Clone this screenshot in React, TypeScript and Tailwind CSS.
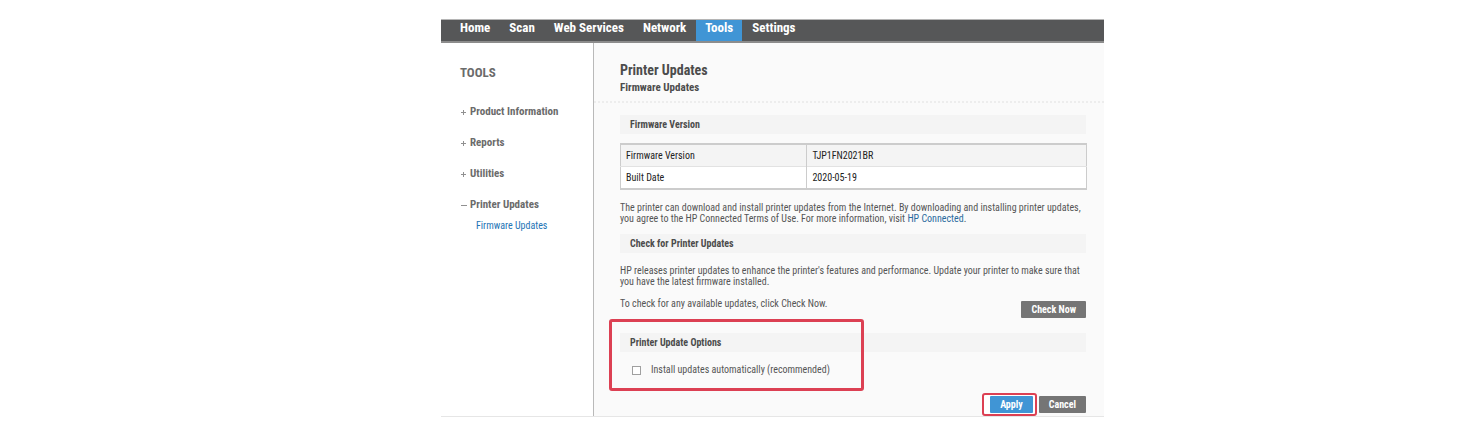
import { useState, type ReactNode } from "react";

const navItems = ["Home", "Scan", "Web Services", "Network", "Tools", "Settings"];

const menu = [
  { label: "Product Information", open: false },
  { label: "Reports", open: false },
  { label: "Utilities", open: false },
  { label: "Printer Updates", open: true },
];

const details = [
  { name: "Firmware Version", value: "TJP1FN2021BR" },
  { name: "Built Date", value: "2020-05-19" },
];

function SectionTitle({ children }: { children: ReactNode }) {
  return (
    <h3 className="mr-px bg-[#f4f4f4] px-[10px] text-[10px] leading-[19px] font-bold text-[#4c4c4c]">
      {children}
    </h3>
  );
}

function NavBar() {
  return (
    <nav className="flex gap-px border-t border-b-2 border-t-[#b5b5b5] border-b-[#8c8c8c] bg-[#565758] pl-[10px]">
      {navItems.map((item) => (
        <a
          key={item}
          href="#"
          className={
            item === "Tools"
              ? "bg-[#4095d5] px-[9px] pb-[5px] text-[13px] leading-4 font-bold text-white"
              : "px-[9px] pb-[5px] text-[13px] leading-4 font-bold text-white"
          }
        >
          {item}
        </a>
      ))}
    </nav>
  );
}

function Sidebar() {
  return (
    <aside className="w-[153px] shrink-0 border-r border-[#b9b9b9] pt-[22px] pl-[19px] text-[#6b6b6b]">
      <h2 className="text-[13px] leading-4 font-bold">TOOLS</h2>
      <ul className="mt-[23px] flex flex-col gap-[15px]">
        {menu.map((entry) => (
          <li key={entry.label}>
            <button type="button" className="flex items-center gap-[3px] text-[11px] leading-4 font-bold">
              <svg viewBox="0 0 7 7" className="size-[7px]" stroke="#909090" aria-hidden="true">
                <path d={entry.open ? "M1 3.5H7" : "M1 3.5H6M3.5 1V6"} />
              </svg>
              {entry.label}
            </button>
            {entry.open && (
              <a href="#" className="mt-[5px] block pl-4 text-[10px] leading-4 text-[#2374b5]">
                Firmware Updates
              </a>
            )}
          </li>
        ))}
      </ul>
    </aside>
  );
}

export default function App() {
  const [auto, setAuto] = useState(false);
  return (
    <div className="bg-white pt-[19px] pr-[358px] pl-[441px] font-['Roboto_Condensed','Roboto',sans-serif]">
      <NavBar />
      <div className="flex border-b border-[#e6e6e6]">
        <Sidebar />
        <main className="min-w-0 grow bg-[#fafafa] text-[10px] leading-[11px] text-[#555555]">
          <header className="border-b-2 border-dotted border-[#ededed] pt-[18px] pb-[5px] pl-[26px] text-[#4c4c4c]">
            <h1 className="text-[14px] leading-[18px] font-bold">Printer Updates</h1>
            <h2 className="mt-px text-[11px] leading-4 font-bold">Firmware Updates</h2>
          </header>
          <div className="pt-[12px] pr-[17px] pl-[26px]">
            <SectionTitle>Firmware Version</SectionTitle>
            <table className="mt-[9px] w-full table-fixed border-collapse border-x border-y-2 border-[#cccccc] text-[10px] leading-[21px] text-[#222222]">
              <tbody>
                {details.map((row) => (
                  <tr key={row.name} className="border-b border-[#e2e2e2] odd:bg-[#f4f4f4] even:bg-white">
                    <th scope="row" className="w-2/5 border-r border-[#cccccc] px-[5px] text-left font-normal">
                      {row.name}
                    </th>
                    <td className="px-[5px]">{row.value}</td>
                  </tr>
                ))}
              </tbody>
            </table>
            <p className="mt-[12px]">
              The printer can download and install printer updates from the Internet. By downloading and installing
              printer updates, you agree to the HP Connected Terms of Use. For more information, visit{" "}
              <a href="#" className="text-[#2a6a9e]">HP Connected</a>.
            </p>

            <div className="mt-[10px]">
              <SectionTitle>Check for Printer Updates</SectionTitle>
            </div>
            <p className="mt-[12px]">
              HP releases printer updates to enhance the printer's features and performance. Update your printer to
              make sure that you have the latest firmware installed.
            </p>
            <div className="mt-[11px] flex items-start justify-between">
              <p>To check for any available updates, click Check Now.</p>
              <button
                type="button"
                className="mt-[3px] mr-px rounded-[1px] bg-[#757575] px-[10px] text-[10px] leading-[17px] font-bold text-white"
              >
                Check Now
              </button>
            </div>

            <section className="relative mt-[15px]">
              <SectionTitle>Printer Update Options</SectionTitle>
              <label className="mt-[10px] flex items-center gap-[10px] pl-[12px] leading-4">
                <input
                  type="checkbox"
                  checked={auto}
                  onChange={(e) => setAuto(e.target.checked)}
                  className="size-[9px] appearance-none border border-[#a0a0a0] bg-white checked:bg-[#4095d5]"
                />
                Install updates automatically (recommended)
              </label>
              <div className="pointer-events-none absolute -top-[14px] -left-[11px] h-[72px] w-[255px] rounded-[3px] border-3 border-[#dc4053]" />
            </section>

            <div className="mt-[15px] mr-px flex items-center justify-end gap-[2px]">
              <div className="rounded-[3px] border-2 border-[#dc4053] bg-white py-px pr-[2px] pl-[6px]">
                <button
                  type="button"
                  className="block rounded-[1px] bg-[#4095d5] px-[10px] text-[10px] leading-[17px] font-bold text-white"
                >
                  Apply
                </button>
              </div>
              <button
                type="button"
                className="rounded-[1px] bg-[#757575] px-[10px] text-[10px] leading-[17px] font-bold text-white"
              >
                Cancel
              </button>
            </div>
          </div>
        </main>
      </div>
    </div>
  );
}
